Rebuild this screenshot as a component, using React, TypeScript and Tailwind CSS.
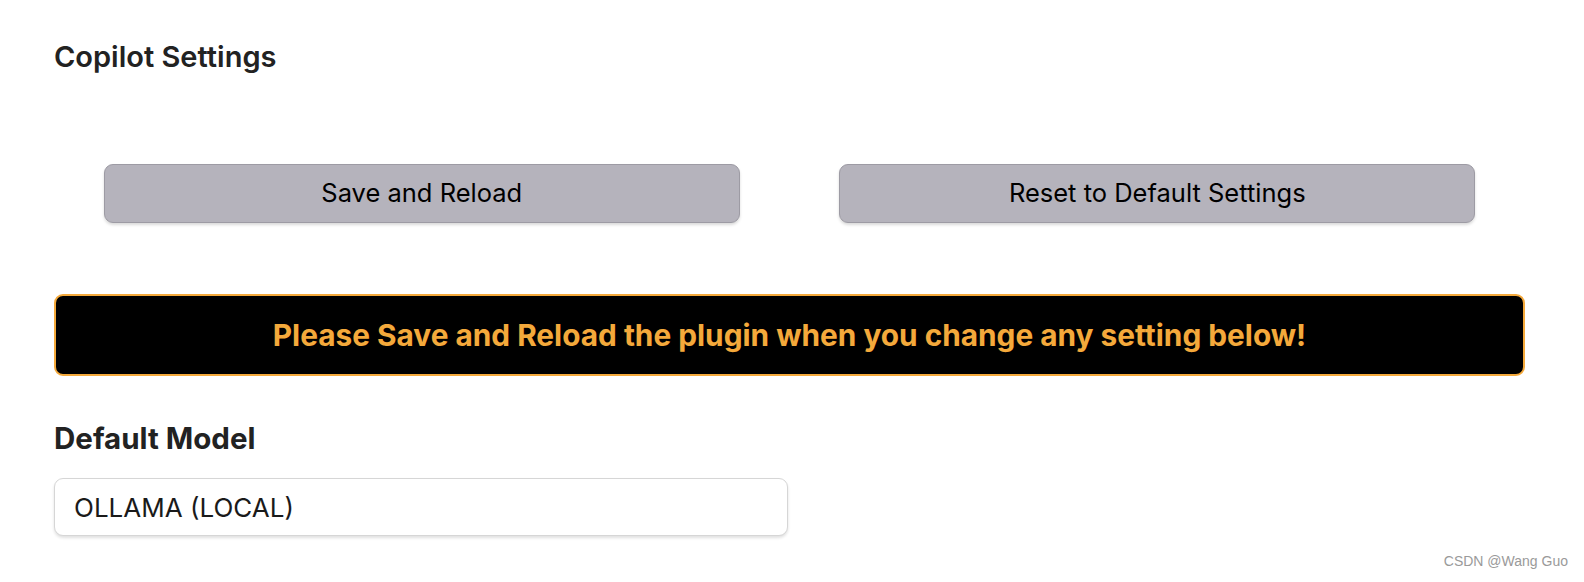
import React from "react";

export default function App() {
  return (
    <div
      className="relative w-full h-[582px] bg-white pl-[54px] pr-[59px] pt-[39px]"
      style={{ fontFamily: "Inter, 'Noto Sans', sans-serif" }}
    >
      <h1 className="text-[29px] leading-[36px] font-semibold text-[#222222]">
        Copilot Settings
      </h1>
      <div className="mt-[89px] flex justify-around">
        <button className="w-[636px] h-[59px] rounded-[9px] bg-[#b5b3bc] border border-[#9d9ba4] shadow-[0_2px_3px_rgba(0,0,0,0.15)] text-[25.5px] text-black">
          Save and Reload
        </button>
        <button className="w-[636px] h-[59px] rounded-[9px] bg-[#b5b3bc] border border-[#9d9ba4] shadow-[0_2px_3px_rgba(0,0,0,0.15)] text-[25.5px] text-black">
          Reset to Default Settings
        </button>
      </div>
      <div className="mt-[71px] h-[82px] rounded-[9px] bg-black border-2 border-[#f4a93b] flex items-center justify-center">
        <span className="text-[29.8px] font-bold text-[#f4a93b]">
          Please Save and Reload the plugin when you change any setting below!
        </span>
      </div>
      <h2 className="mt-[44px] text-[29.5px] leading-[36px] font-bold text-[#222222]">
        Default Model
      </h2>
      <div className="mt-[22px] w-[734px] h-[58px] rounded-[9px] bg-white border border-[#d6d6d6] shadow-[0_2px_3px_rgba(0,0,0,0.12)] flex items-center px-[19px] text-[26px] text-[#1a1a1a]">
        OLLAMA (LOCAL)
      </div>
      <div
        className="absolute right-[16px] bottom-[10px] text-[14px] text-[#9a9a9a]"
        style={{ fontFamily: "'Liberation Sans', Arial, sans-serif" }}
      >
        CSDN @Wang Guo
      </div>
    </div>
  );
}
